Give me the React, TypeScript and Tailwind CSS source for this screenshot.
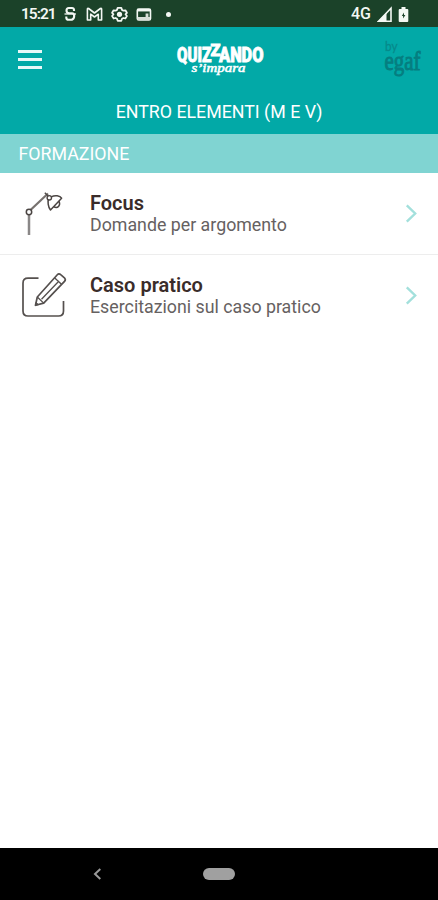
import type { ReactNode } from 'react';

type MenuItem = { title: string; subtitle: string; icon: ReactNode };

function StatusIcons() {
    return (
        <svg width="112" height="18" viewBox="0 0 112 18" fill="none" stroke="#f4f8f4" className="ml-[7px]">
            {/* S */}
            <path d="M12 6V4.8Q12 3 10 3H6.8Q4.5 3 4.5 5.5T7 8.2H10Q12.2 8.2 12.2 11T9.8 14.8H6.5Q4.3 14.8 4.3 12.5V11.5" strokeWidth="2.1" />
            <path d="M2.5 9H14" strokeWidth="1.3" />
            {/* M */}
            <path d="M25.4 15V4.2Q25.4 3 26.6 3.5L32.5 8L38.4 3.5Q39.6 3 39.6 4.2V15H36.3V9.2L32.5 12L28.7 9.2V15Z" strokeWidth="1.6" strokeLinejoin="round" />
            {/* Ingranaggio */}
            <path d="M55.7 2.9H59.3L60 4.9L61.4 5.7L63.4 5.3L64.9 7.8L63.5 9.3L64.9 11L63.3 13.5L61.4 13L60 13.8L59.3 15.8H55.7L55 13.8L53.6 13L51.7 13.5L50.1 11L51.5 9.3L50.1 7.8L51.6 5.3L53.6 5.7L55 4.9Z" strokeWidth="1.8" strokeLinejoin="round" />
            <circle cx="57.5" cy="9.3" r="2.6" fill="#f4f8f4" stroke="none" />
            {/* Scheda */}
            <rect x="75.3" y="4" width="13.2" height="11" rx="1.5" strokeWidth="1.6" />
            <path d="M75 5.2H88.7" strokeWidth="2.5" />
            <path d="M75.5 13.5H88M85 8.5V14" strokeWidth="2.8" stroke="#d8dfd8" />
            <circle cx="106.5" cy="9.5" r="2.5" fill="#f4f8f4" stroke="none" />
        </svg>
    );
}

function StatusBar() {
    return (
        <div className="flex h-[27px] items-center bg-[#1b4229] pr-[29px] pl-[21px] text-[#f4f8f4]">
            <span className="w-[34px] text-[15.5px] leading-5 font-semibold tracking-[-1px] whitespace-nowrap">15:21</span>
            <StatusIcons />
            <span className="ml-auto w-[26px] text-[16px] leading-5 font-medium">4G</span>
            <svg width="32" height="20" viewBox="26 0 32 20" fill="#f4f8f4">
                <path d="M27.5 17.2L40 4.2V17.2Z" fill="none" stroke="#f4f8f4" strokeWidth="1.6" />
                <path d="M27 17.5L35.5 8.8V17.5Z" />
                <path d="M50.5 3H54.5V5H56.3Q57.3 5 57.3 6V17Q57.3 18 56.3 18H48.7Q47.7 18 47.7 17V6Q47.7 5 48.7 5H50.5Z" />
                <path d="M53 8.5L50.8 12H52.1V14.5L54.4 11H53Z" fill="#1b4229" />
            </svg>
        </div>
    );
}

function QuizzandoLogo() {
    return (
        <svg width="90" height="38" viewBox="0 0 90 38" fill="#ffffff" stroke="#ffffff" className="overflow-visible">
            <g fontWeight="900" strokeWidth="0.8">
                <text x="1" y="22.3" fontSize="19.5" textLength="25" lengthAdjust="spacingAndGlyphs">QUI</text>
                <text x="26" y="22.3" fontSize="19.5" textLength="9.5" lengthAdjust="spacingAndGlyphs">Z</text>
                <text x="34.5" y="16" fontSize="17" textLength="10" lengthAdjust="spacingAndGlyphs">Z</text>
                <text x="43" y="22.3" fontSize="19.5" textLength="44.5" lengthAdjust="spacingAndGlyphs">ANDO</text>
            </g>
            <text x="15.5" y="31.8" fontSize="11.5" fontStyle="italic" strokeWidth="0.5" textLength="54" lengthAdjust="spacingAndGlyphs" className="font-['Liberation_Serif',serif]">s’impara</text>
        </svg>
    );
}

function EgafLogo() {
    return (
        <svg width="40" height="40" viewBox="0 0 40 40" fill="#057e80" className="overflow-visible">
            <text x="2" y="12" fontSize="13" textLength="12.5" lengthAdjust="spacingAndGlyphs" fill="#068a8b" stroke="#068a8b" strokeWidth="0.3" className="font-['Lato',sans-serif]">by</text>
            <text x="1.5" y="31" fontSize="28" textLength="36" lengthAdjust="spacingAndGlyphs" stroke="#057e80" strokeWidth="1" className="font-['Liberation_Serif',serif]">egaf</text>
        </svg>
    );
}

function LampIcon() {
    return (
        <svg width="46" height="48" viewBox="0 0 46 48" fill="none">
            <path d="M9 25V46" stroke="#8a8787" strokeWidth="2.5" />
            <path d="M10.5 21L28 4.5" stroke="#77726f" strokeWidth="2.2" />
            <path d="M24.8 3.8L29.3 8.3" stroke="#504b48" strokeWidth="1.4" />
            <circle cx="9" cy="23" r="2.7" stroke="#4b4543" strokeWidth="1.5" />
            <path d="M31.2 7.9C35 6 40 6.6 41.6 9.2L30.5 21C28 18 27.4 12.2 28.8 9.4" stroke="#4b4543" strokeWidth="1.5" strokeLinejoin="round" />
            <circle cx="29.3" cy="8.8" r="2.2" fill="#fff" stroke="#4b4543" strokeWidth="1.4" />
            <path d="M38.8 12.2C41 16 38 19.8 33.8 17.8" stroke="#4b4543" strokeWidth="1.5" />
        </svg>
    );
}

function PencilIcon() {
    return (
        <svg width="46" height="48" viewBox="0 0 46 48" fill="none" stroke="#55504e" strokeWidth="1.7" strokeLinejoin="round">
            <path d="M18.5 7.2H8Q3 7.2 3 12.2V40Q3 45 8 45H38.5Q43.5 45 43.5 40V30" />
            <path d="M15.5 34.3L17.3 26L37.3 3.8Q38.9 2 40.7 3.7L44.7 7.2Q46 8.7 44.5 10.3L23.7 32.1Z" />
            <path d="M17.3 26L23.7 32.1M34.5 6.8L41.5 13.3M21.5 28.3L39 10" strokeWidth="1.3" />
            <path d="M15.3 34.5L16 31.2L18.7 33.7Z" fill="#55504e" strokeWidth="0.8" />
        </svg>
    );
}

const items: MenuItem[] = [
    { title: 'Focus', subtitle: 'Domande per argomento', icon: <LampIcon /> },
    { title: 'Caso pratico', subtitle: 'Esercitazioni sul caso pratico', icon: <PencilIcon /> },
];

function MenuRow({ title, subtitle, icon }: MenuItem) {
    return (
        <button className="flex h-[81.5px] w-full items-center border-b border-[#ededed] pr-5 pl-5 text-left last:border-b-0">
            <span className="flex w-[70px] shrink-0 [&>svg]:overflow-visible">{icon}</span>
            <span className="block flex-1 pt-0.5">
                <span className="block text-[20px] leading-[22px] font-semibold text-[#3a2c2a]">{title}</span>
                <span className="block text-[17.8px] leading-[22px] text-[#666161]">{subtitle}</span>
            </span>
            <svg width="14" height="20" viewBox="0 0 14 20" fill="none" stroke="#a3e0dc" strokeWidth="2.4">
                <path d="M2.8 2.3L11.2 10.5L2.8 18.7" />
            </svg>
        </button>
    );
}

export default function App() {
    return (
        <div className="flex h-[900px] w-full flex-col overflow-hidden bg-white font-['Roboto','Liberation_Sans',sans-serif]">
            <StatusBar />

            <header className="h-[107px] bg-[#02a9a7] text-white">
                <div className="grid h-[63px] grid-cols-3 items-center pr-[15px] pl-[18px]">
                    <button className="flex w-6 flex-col gap-[5px] pt-px" aria-label="Menu">
                        <span className="h-[3px] w-full bg-[#e8f8f8]" />
                        <span className="h-[3px] w-full bg-[#e8f8f8]" />
                        <span className="h-[3px] w-full bg-[#e8f8f8]" />
                    </button>
                    <div className="flex justify-center"><QuizzandoLogo /></div>
                    <div className="flex justify-end"><EgafLogo /></div>
                </div>
                <h1 className="text-center text-[17.8px] leading-[44px]">ENTRO ELEMENTI (M E V)</h1>
            </header>

            <h2 className="h-[39px] bg-[#80d4d2] pl-[18.5px] text-[17.8px] leading-[39px] text-white">FORMAZIONE</h2>

            <main className="flex-1">
                {items.map(item => <MenuRow key={item.title} {...item} />)}
            </main>

            {/* Barra di navigazione */}
            <nav className="grid h-[52px] grid-cols-[1fr_32px_1fr] items-center bg-black">
                <svg width="9" height="12" viewBox="0 0 9 12" fill="none" stroke="#999999" strokeWidth="2" className="ml-[93px]">
                    <path d="M7.3 1L2 6L7.3 11" />
                </svg>
                <span className="h-3 rounded-full bg-[#a0a0a0]" />
            </nav>
        </div>
    );
}
